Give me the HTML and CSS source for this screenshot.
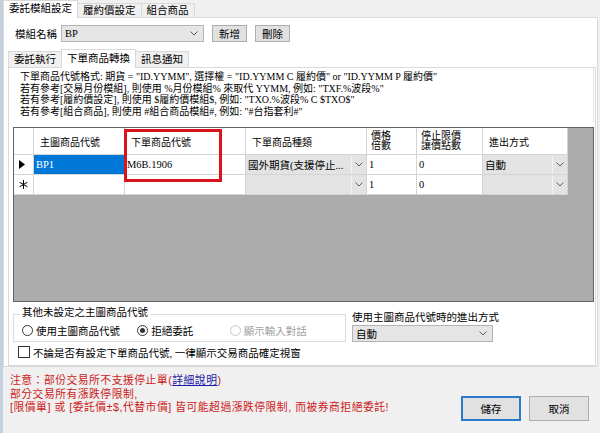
FILE: index.html
```html
<!DOCTYPE html>
<html lang="zh-Hant">
<head>
<meta charset="utf-8">
<link rel="stylesheet" href="styles.css">
</head>
<body>
<div class="frame">
  <div class="outer-tabs">
    <div class="otab active">委託模組設定</div>
    <div class="otab">履約價設定</div>
    <div class="otab">組合商品</div>
  </div>
  <div class="outer-page">
    <div class="name-row">
      <span class="name-label">模組名稱</span>
      <div class="combo name-combo"><span class="combo-text">BP</span><svg class="chev" width="8" height="5" viewBox="0 0 8 5"><path d="M0.5 0.5 L4 4 L7.5 0.5" fill="none" stroke="#606060" stroke-width="1"/></svg></div>
      <button class="btn small">新增</button>
      <button class="btn small">刪除</button>
    </div>
    <div class="inner-tabs">
      <div class="itab">委託執行</div>
      <div class="itab active">下單商品轉換</div>
      <div class="itab">訊息通知</div>
    </div>
    <div class="inner-page">
      <div class="help">
        <div>下單商品代號格式: 期貨 = "ID.YYMM", 選擇權 = "ID.YYMM C 履約價" or "ID.YYMM P 履約價"</div>
        <div>若有參考[交易月份模組], 則使用 %月份模組% 來取代 YYMM, 例如: "TXF.%波段%"</div>
        <div>若有參考[履約價設定], 則使用 $履約價模組$, 例如: "TXO.%波段% C $TXO$"</div>
        <div>若有參考[組合商品], 則使用 #組合商品模組#, 例如: "#台指套利#"</div>
      </div>
      <div class="grid-wrap">
        <div class="grid">
          <div class="cell hdr rh"></div>
          <div class="cell hdr">主圖商品代號</div>
          <div class="cell hdr">下單商品代號</div>
          <div class="cell hdr">下單商品種類</div>
          <div class="cell hdr two">價格<br>倍數</div>
          <div class="cell hdr two">停止限價<br>讓價點數</div>
          <div class="cell hdr">進出方式</div>

          <div class="cell rh"><svg width="6" height="9" viewBox="0 0 6 9"><path d="M0 0 L6 4.5 L0 9 Z" fill="#000"/></svg></div>
          <div class="cell sel">BP1</div>
          <div class="cell">M6B.1906</div>
          <div class="cell cb"><span class="cb-text">國外期貨(支援停止...</span><span class="cb-btn"><svg width="8" height="5" viewBox="0 0 8 5"><path d="M0.5 0.5 L4 4 L7.5 0.5" fill="none" stroke="#606060" stroke-width="1"/></svg></span></div>
          <div class="cell">1</div>
          <div class="cell">0</div>
          <div class="cell cb"><span class="cb-text">自動</span><span class="cb-btn"><svg width="8" height="5" viewBox="0 0 8 5"><path d="M0.5 0.5 L4 4 L7.5 0.5" fill="none" stroke="#606060" stroke-width="1"/></svg></span></div>

          <div class="cell rh"><svg width="9" height="9" viewBox="0 0 9 9"><path d="M4.5 0 V9 M0.6 2.25 L8.4 6.75 M0.6 6.75 L8.4 2.25" fill="none" stroke="#000" stroke-width="1"/></svg></div>
          <div class="cell"></div>
          <div class="cell"></div>
          <div class="cell cb"><span class="cb-text"></span><span class="cb-btn"><svg width="8" height="5" viewBox="0 0 8 5"><path d="M0.5 0.5 L4 4 L7.5 0.5" fill="none" stroke="#606060" stroke-width="1"/></svg></span></div>
          <div class="cell">1</div>
          <div class="cell">0</div>
          <div class="cell cb"><span class="cb-text"></span><span class="cb-btn"><svg width="8" height="5" viewBox="0 0 8 5"><path d="M0.5 0.5 L4 4 L7.5 0.5" fill="none" stroke="#606060" stroke-width="1"/></svg></span></div>
        </div>
        <div class="highlight"></div>
      </div>
      <div class="options">
        <div class="group">
          <div class="legend">其他未設定之主圖商品代號</div>
          <div class="radios">
            <span class="radio"><span class="dot"></span>使用主圖商品代號</span>
            <span class="radio checked"><span class="dot"></span>拒絕委託</span>
            <span class="radio disabled"><span class="dot"></span>顯示輸入對話</span>
          </div>
        </div>
        <div class="side">
          <div class="side-label">使用主圖商品代號時的進出方式</div>
          <div class="combo side-combo"><span class="combo-text">自動</span><svg class="chev" width="8" height="5" viewBox="0 0 8 5"><path d="M0.5 0.5 L4 4 L7.5 0.5" fill="none" stroke="#606060" stroke-width="1"/></svg></div>
        </div>
      </div>
      <div class="check-row"><span class="box"></span>不論是否有設定下單商品代號, 一律顯示交易商品確定視窗</div>
    </div>
  </div>
  <div class="footer">
    <div class="notes">
      <div>注意：部份交易所不支援停止單(<span class="link">詳細說明</span>)</div>
      <div>部分交易所有漲跌停限制,</div>
      <div>[限價單] 或 [委託價±$,代替市價] 皆可能超過漲跌停限制, 而被券商拒絕委託!</div>
    </div>
    <div class="actions">
      <button class="btn big default">儲存</button>
      <button class="btn big">取消</button>
    </div>
  </div>
</div>
</body>
</html>
```
FILE: styles.css
```css
* { box-sizing: border-box; }
html, body { margin: 0; padding: 0; }
body {
  width: 600px;
  height: 433px;
  overflow: hidden;
  background: #f0f0f0;
  font-family: "Liberation Serif", "Noto Sans CJK TC", serif;
  font-size: 10.5px;
  color: #000;
}
.frame {
  height: 433px;
  border-left: 3px solid #c3d0de;
  display: flex;
  flex-direction: column;
}
.outer-tabs {
  display: flex;
  align-items: flex-end;
  height: 18px;
}
.otab {
  height: 15px;
  line-height: 14px;
  padding: 0 5px;
  border: 1px solid #d9d9d9;
  border-bottom: none;
  background: #f0f0f0;
  margin-left: -1px;
}
.otab:first-child { margin-left: 0; }
.otab.active {
  height: 18px;
  line-height: 16px;
  background: #fff;
  position: relative;
  z-index: 1;
  padding: 0 5px;
}
.outer-page {
  height: 350px;
  width: 595px;
  background: #fff;
  border: 1px solid #d9d9d9;
  margin-top: -1px;
  display: flex;
  flex-direction: column;
}
.name-row {
  display: flex;
  align-items: center;
  height: 17px;
  margin-top: 7px;
  padding-left: 11px;
}
.name-label { width: 46px; }
.combo {
  height: 17px;
  background: #e5e5e5;
  border: 1px solid #b4b4b4;
  display: flex;
  align-items: center;
  justify-content: space-between;
  padding: 0 5px 0 3px;
}
.name-combo { width: 143px; }
.btn {
  font-family: inherit;
  font-size: 10.5px;
  background: #e1e1e1;
  border: 1px solid #adadad;
  padding: 0;
  color: #000;
}
.btn.small { width: 35px; height: 17px; margin-left: 8px; }
.inner-tabs {
  display: flex;
  align-items: flex-end;
  height: 18px;
  margin-top: 7px;
  padding-left: 4px;
}
.itab {
  height: 16px;
  line-height: 15px;
  padding: 0 5px;
  border: 1px solid #d9d9d9;
  border-bottom: none;
  background: #f0f0f0;
  margin-left: -1px;
}
.itab:first-child { margin-left: 0; }
.itab.active {
  height: 19px;
  line-height: 17px;
  background: #fff;
  position: relative;
  z-index: 1;
  margin-bottom: -1px;
}
.inner-page {
  margin-left: 4px;
  width: 588px;
  height: 301px;
  border: 1px solid #d9d9d9;
  background: #fff;
  display: flex;
  flex-direction: column;
}
.help {
  height: 54px;
  padding: 3px 0 0 11px;
  font-size: 10px;
  line-height: 11.7px;
  border-right: 1px solid #e3e3e3;
  margin-right: 1px;
}
.grid-wrap {
  position: relative;
  margin: 5px 0 0 4px;
  width: 581px;
  height: 175px;
  background: #ababab;
  border: 1px solid #646464;
}
.grid {
  display: grid;
  grid-template-columns: 20px 91px 121px 121px 50px 66px 85px;
  grid-template-rows: 27px 20px 20px;
  width: 554px;
}
.cell {
  background: #fff;
  border-right: 1px solid #d4d4d4;
  border-bottom: 1px solid #d4d4d4;
  display: flex;
  align-items: center;
  padding-left: 2px;
  white-space: nowrap;
  overflow: hidden;
}
.cell.hdr { padding-left: 6px; font-size: 10px; }
.cell.hdr.two { line-height: 10.5px; padding-left: 4px; }
.cell.rh { padding-left: 5px; }
.cell.sel { background: #0078d7; color: #fff; }
.cell.cb { background: #e3e3e3; padding-right: 0; justify-content: space-between; }
.cb-btn {
  width: 15px;
  height: 18px;
  border-left: 1px solid #f4f4f4;
  display: flex;
  align-items: center;
  justify-content: center;
}
.highlight {
  position: absolute;
  left: 110px;
  top: 1px;
  width: 98px;
  height: 53px;
  border: 3px solid #d8141c;
}
.options {
  display: flex;
  height: 40px;
  margin-left: 4px;
}
.group {
  width: 333px;
  position: relative;
  margin-top: 12px;
  border: 1px solid #dcdcdc;
  padding-left: 8px;
}
.legend {
  position: absolute;
  top: -9px;
  left: 6px;
  background: #fff;
  padding: 0 2px;
  line-height: 14px;
}
.radios {
  display: flex;
  align-items: center;
  height: 100%;
  padding-top: 5px;
}
.radio { display: flex; align-items: center; width: 122px; }
.radio.checked { width: 98px; }
.radio .dot {
  width: 11px;
  height: 11px;
  border-radius: 50%;
  border: 1px solid #333;
  margin-right: 3px;
  background: #fff;
  position: relative;
}
.radio.checked .dot::after {
  content: "";
  position: absolute;
  left: 2px;
  top: 2px;
  width: 5px;
  height: 5px;
  border-radius: 50%;
  background: #333;
}
.radio.disabled { color: #a0a0a0; }
.radio.disabled .dot { border-color: #c8c8c8; }
.side {
  margin-left: 6px;
  padding-top: 9px;
}
.side-label { line-height: 14px; }
.side-combo { width: 141px; }
.check-row {
  display: flex;
  align-items: center;
  margin: 3px 0 0 9px;
  height: 14px;
}
.box {
  width: 12px;
  height: 12px;
  border: 1px solid #333;
  margin-right: 3px;
  background: #fff;
}
.footer {
  flex: 1;
  display: flex;
  justify-content: space-between;
  padding: 7px 11px 0 7px;
}
.notes {
  font-family: "Liberation Sans", "Noto Sans CJK TC", sans-serif;
  color: #cc1b1b;
  font-size: 10.8px;
  line-height: 13.7px;
  letter-spacing: 0.5px;
}
.link { color: #1a1aa6; text-decoration: underline; }
.actions {
  display: flex;
  gap: 8px;
  padding-top: 22px;
}
.btn.big { width: 60px; height: 25px; }
.btn.default { border: 2px solid #2a7bcc; }
```
